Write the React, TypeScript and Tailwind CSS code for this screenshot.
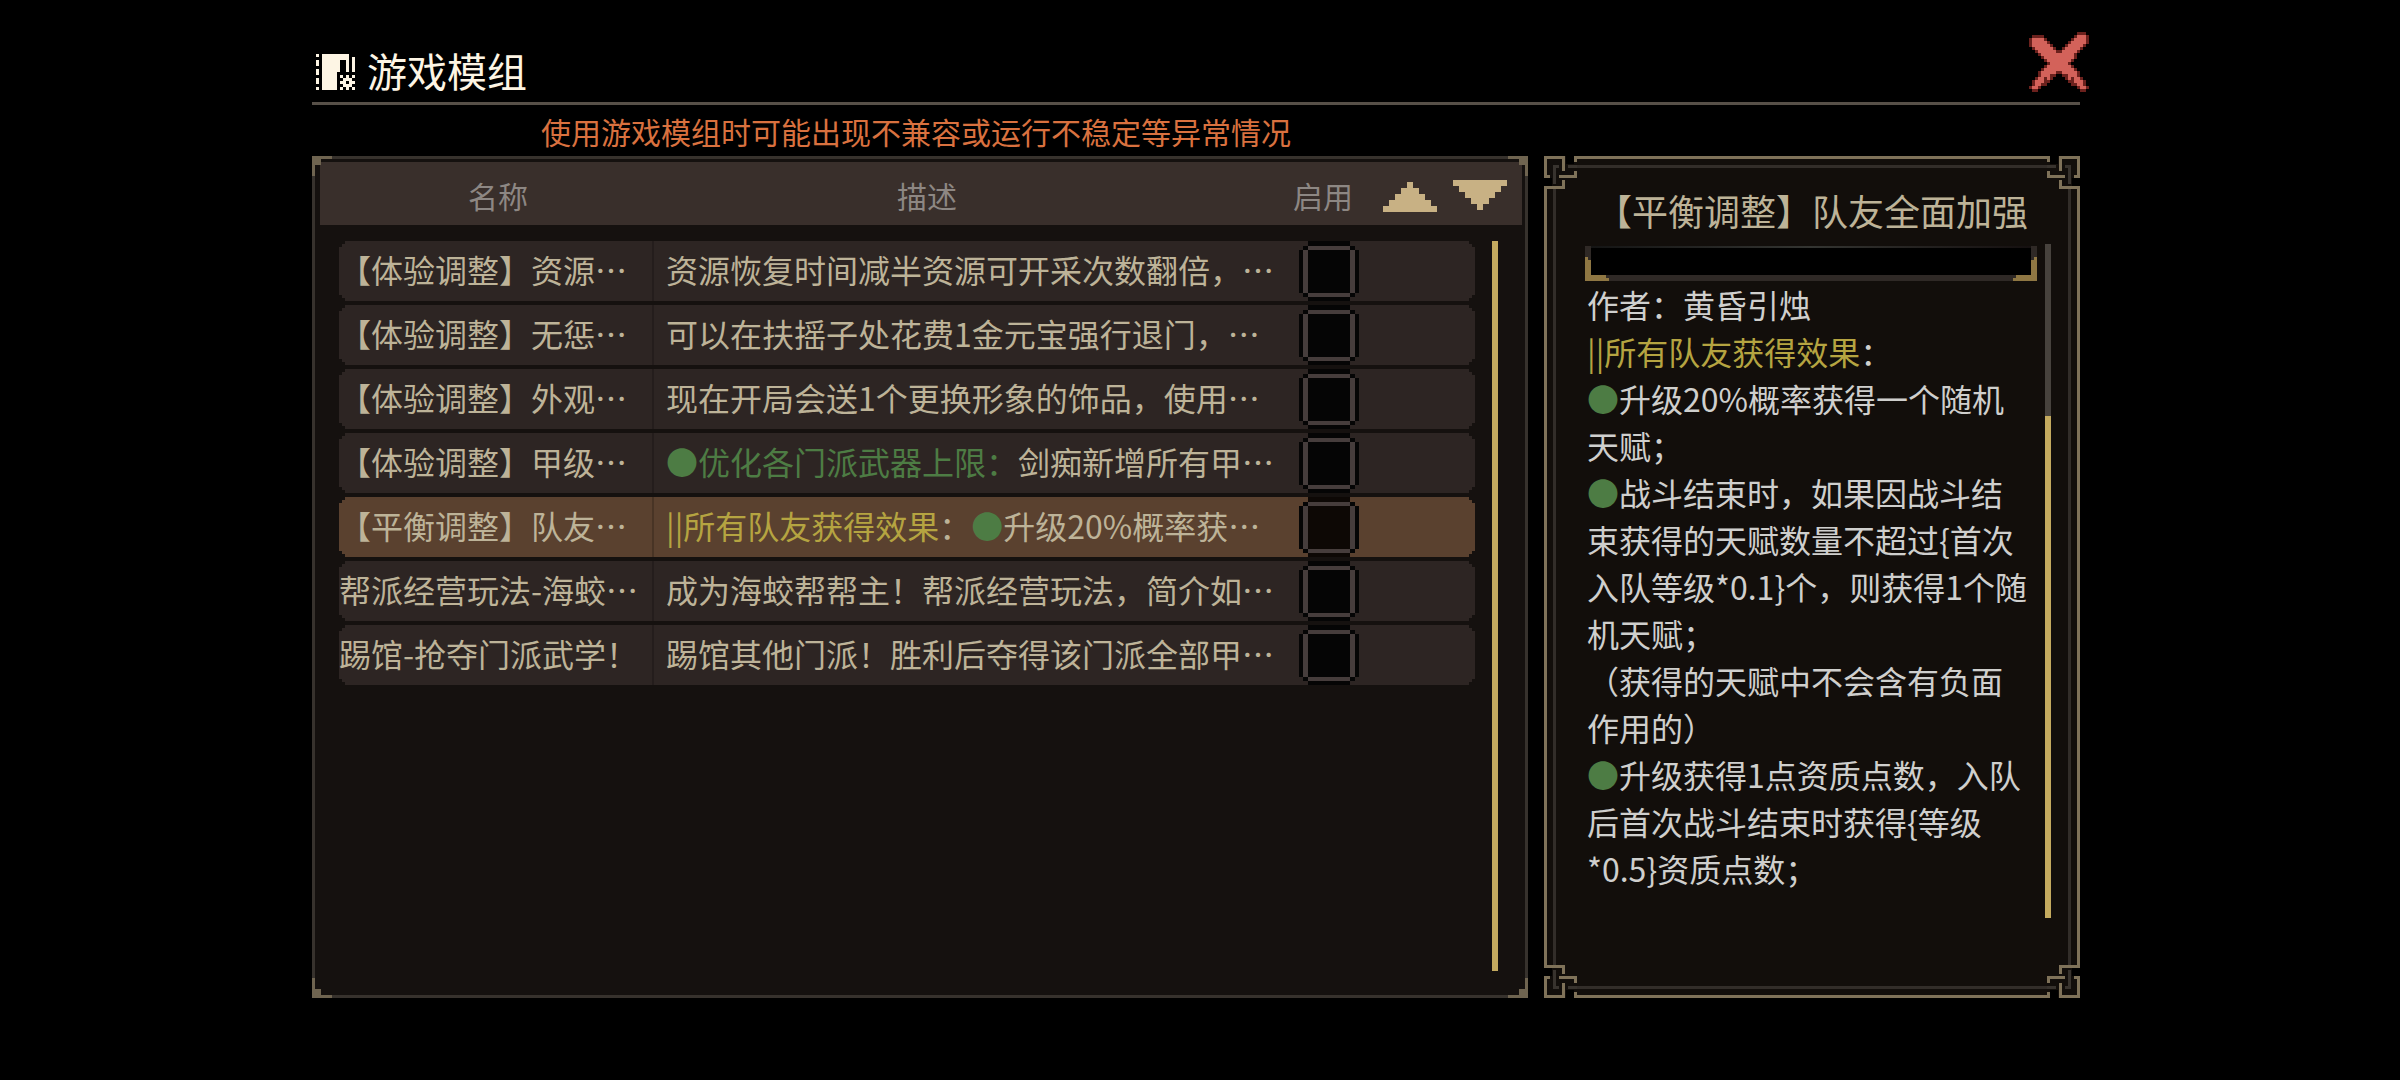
import React, { useState } from "react";
import clsx from "clsx";

interface Mod {
  id: string;
  name: string;
  description: React.ReactNode;
}

const Dot: React.FC = () => <span className="text-[#4d7c44]">●</span>;

const MODS: Mod[] = [
  { id: "resource", name: "【体验调整】资源…", description: "资源恢复时间减半资源可开采次数翻倍，…" },
  { id: "penalty", name: "【体验调整】无惩…", description: "可以在扶摇子处花费1金元宝强行退门，…" },
  { id: "look", name: "【体验调整】外观…", description: "现在开局会送1个更换形象的饰品，使用…" },
  {
    id: "weapon",
    name: "【体验调整】甲级…",
    description: (
      <>
        <span className="text-[#4d7c44]">●优化各门派武器上限：</span>剑痴新增所有甲…
      </>
    )
  },
  {
    id: "teammate",
    name: "【平衡调整】队友…",
    description: (
      <>
        <span className="text-[#b5a441]">||所有队友获得效果</span>：<Dot />升级20%概率获…
      </>
    )
  },
  { id: "gang", name: "帮派经营玩法-海蛟…", description: "成为海蛟帮帮主！帮派经营玩法，简介如…" },
  { id: "dojo", name: "踢馆-抢夺门派武学！", description: "踢馆其他门派！胜利后夺得该门派全部甲…" }
];

const BOOK_PIXELS = [
  "X.XXXXXXXXX..",
  "..XXXXXXXXX.X",
  "X.XXXXXX..X.X",
  "X.XXXXXX..X.X",
  "..XXXXXX..X.X",
  "X.XXXXXX..X.X",
  "X.XXXXX......",
  "..XXXXX.X.X.X",
  "X.XXXXX..XXX.",
  "X.XXXXX.XX.XX",
  "..XXXXX..XXX.",
  "X.XXXXX.X.X.X"
];

const CLOSE_PIXELS = [
  "................ddd.",
  ".dddd..........drrrd",
  "drrrrd........drrrrd",
  "drrrrrd......drrrrrd",
  "drrrrrrd....drrrrrd.",
  ".drrrrrrd..drrrrrd..",
  "..drrrrrrddrrrrrd...",
  "...drrrrrrrrrrrd....",
  "....drrrrrrrrrrd....",
  ".....drrrrrrrrd.....",
  "......drrrrrrd......",
  ".....drrrrrrrrd.....",
  "....drrrrrrrrrrd....",
  "...drrrrrddrrrrrd...",
  "...drrrdd..ddrrrd...",
  "..drrdrd....drdrrd..",
  ".drrrdd......ddrrrd.",
  ".drrdd........ddrrd.",
  "drrd............drrd",
  ".dd..............dd."
];

const PIXEL_COLORS: Record<string, string> = { X: "#fdf5e4", d: "#6b211d", r: "#d3625a" };

const PixelArt: React.FC<{ rows: string[]; className: string }> = ({ rows, className }) => (
  <svg
    viewBox={`0 0 ${rows[0].length} ${rows.length}`}
    className={className}
    shapeRendering="crispEdges"
    aria-hidden="true"
  >
    {rows.map((row, y) =>
      row.split("").map((c, x) =>
        c === "." ? null : <rect key={`${x}-${y}`} x={x} y={y} width="1" height="1" fill={PIXEL_COLORS[c]} />
      )
    )}
  </svg>
);

const Triangle: React.FC<{ flipped?: boolean }> = ({ flipped }) => (
  <svg
    viewBox="0 0 9 5"
    className={clsx("w-[54px] h-[30px]", flipped && "-scale-y-100")}
    fill="#c8b184"
    shapeRendering="crispEdges"
    aria-hidden="true"
  >
    <path d="M4 0h1v1h1v1h1v1h1v1h1v1H0V4h1V3h1V2h1V1h1z" />
  </svg>
);

/* Small L-shaped bracket on the list panel */
const Bracket: React.FC<{ className: string }> = ({ className }) => (
  <svg viewBox="0 0 20 20" className={clsx("absolute w-5 h-5", className)} fill="#6f6450" shapeRendering="crispEdges" aria-hidden="true">
    <path d="M0 0h20v3H9v6H3v11H0z" />
  </svg>
);

/* Woven corner on the detail panel */
const Knot: React.FC<{ className: string }> = ({ className }) => (
  <svg viewBox="0 0 33 33" className={clsx("absolute w-[33px] h-[33px]", className)} shapeRendering="crispEdges" aria-hidden="true">
    <path d="M0 0h33v33H0z" fill="#120e0b" />
    <path d="M0 22h8v8H0zM22 0h8v8h-8z" fill="#000" />
    <path d="M9 9h6v3h-3v16H9zM24 9h9v3h-9z" fill="#38332e" />
    <path
      d="M0 0h21v15h-3V3H3v16h3v3H0zM0 30h18v-6h3v9H0zM15 19h15v-4h3v7H15zM30 0h3v6h-3z"
      fill="#7f7259"
    />
  </svg>
);

const ModCheckbox: React.FC<{
  label: string;
  active: boolean;
  checked: boolean;
  onChange: () => void;
}> = ({ label, active, checked, onChange }) => (
  <label className="relative block w-[60px] h-[60px] cursor-pointer">
    <input
      type="checkbox"
      checked={checked}
      onChange={onChange}
      aria-label={label}
      className="absolute inset-0 w-full h-full appearance-none cursor-pointer"
    />
    <svg viewBox="0 0 60 60" className="relative w-full h-full pointer-events-none" shapeRendering="crispEdges" aria-hidden="true">
      <path d="M9 0h42v5h5v4h4v43h-4v4h-5v4H9v-4H4v-4H0V9h4V5h5z" fill="#050505" />
      {active && <path d="M9 0h42v60H9z" fill="#0d0805" />}
      <path d="M9 5h42v4H9zM9 52h42v4H9zM4 9h5v43H4zM51 9h5v43h-5z" fill="#463d3c" />
      {checked && <path d="M18 30h5v5h5v5h4v-5h4v-6h4v-6h4v8h-4v6h-4v6h-4v5h-4v-5h-5v-5h-5z" fill="#c4aa5f" />}
    </svg>
  </label>
);

export default function App() {
  const [selectedId, setSelectedId] = useState("teammate");
  const [enabled, setEnabled] = useState<string[]>([]);

  const toggleMod = (id: string) => {
    setEnabled((prev) => (prev.includes(id) ? prev.filter((item) => item !== id) : [...prev, id]));
  };

  return (
    <div
      lang="zh-CN"
      className="min-h-screen bg-black pl-78 pr-80 pb-[82px] flex flex-col font-['Noto_Sans_CJK_SC',sans-serif] text-[#bdb398]"
    >
      {/* Header */}
      <header className="h-[105px] pt-8 border-b-3 border-[#575048] flex justify-between">
        <div className="self-end h-[60px] pl-1 flex items-center gap-3 text-[#fdf5e4]">
          <PixelArt rows={BOOK_PIXELS} className="w-[39px] h-[36px]" />
          <h1 className="pb-1 text-[40px] leading-[56px]">游戏模组</h1>
        </div>
        <button type="button" aria-label="关闭" className="self-start -mr-[9px] cursor-pointer">
          <PixelArt rows={CLOSE_PIXELS} className="w-[60px] h-[60px]" />
        </button>
      </header>

      <main className="flex-1 flex gap-4">
        {/* Mod list */}
        <section className="flex-1 min-w-0 flex flex-col">
          <p className="h-[51px] pt-1 pr-2 text-center text-[30px] leading-[45px] text-[#d9713f]">
            使用游戏模组时可能出现不兼容或运行不稳定等异常情况
          </p>
          <div className="relative flex-1 flex border-3 border-[#37322d] bg-[#15110f]">
            <table className="flex-1 min-w-0 pt-[3px] flex flex-col">
              <thead className="block pl-[5px]">
                <tr className="h-[63px] pt-1 -mr-[47px] bg-[#392f2b] flex items-center text-[30px] text-[#8d8783]">
                  <th className="w-[356px] font-normal">名称</th>
                  <th className="flex-1 pr-[86px] font-normal">描述</th>
                  <th className="w-[119px] text-left font-normal">
                    <span className="pl-[29px]">启用</span>
                  </th>
                  <th className="pr-[15px] flex gap-4 font-normal">
                    <button type="button" aria-label="上移" className="pt-[2px] cursor-pointer">
                      <Triangle />
                    </button>
                    <button type="button" aria-label="下移" className="pb-[2px] cursor-pointer">
                      <Triangle flipped />
                    </button>
                  </th>
                </tr>
              </thead>
              <tbody className="pt-4 pl-6 flex flex-col gap-1">
                {MODS.map((mod) => (
                  <tr
                    key={mod.id}
                    onClick={() => setSelectedId(mod.id)}
                    className={clsx(
                      "h-[60px] flex items-center text-[32px] leading-[56px] whitespace-nowrap cursor-pointer",
                      "[clip-path:polygon(0_6px,3px_6px,3px_3px,6px_3px,6px_0,calc(100%-6px)_0,calc(100%-6px)_3px,calc(100%-3px)_3px,calc(100%-3px)_6px,100%_6px,100%_calc(100%-6px),calc(100%-3px)_calc(100%-6px),calc(100%-3px)_calc(100%-3px),calc(100%-6px)_calc(100%-3px),calc(100%-6px)_100%,6px_100%,6px_calc(100%-3px),3px_calc(100%-3px),3px_calc(100%-6px),0_calc(100%-6px))]",
                      mod.id === selectedId ? "bg-[#5a412f]" : "bg-[#2d2523]"
                    )}
                  >
                    <td className="w-[315px] pb-1 border-r-2 border-black/20">{mod.name}</td>
                    <td className="flex-1 min-w-0 pl-3 pb-1 overflow-hidden">{mod.description}</td>
                    <td className="w-[176px]">
                      <ModCheckbox
                        label={`启用 ${mod.name}`}
                        active={mod.id === selectedId}
                        checked={enabled.includes(mod.id)}
                        onChange={() => toggleMod(mod.id)}
                      />
                    </td>
                  </tr>
                ))}
              </tbody>
            </table>
            <div className="w-[6px] ml-[17px] mr-[27px] mt-[82px] mb-6 bg-[#c4aa5f]" />
            <Bracket className="-top-[3px] -left-[3px]" />
            <Bracket className="-top-[3px] -right-[3px] -scale-x-100" />
            <Bracket className="-bottom-[3px] -left-[3px] -scale-y-100" />
            <Bracket className="-bottom-[3px] -right-[3px] -scale-100" />
          </div>
        </section>

        {/* Mod detail */}
        <aside className="relative w-[536px] mt-[51px] pt-[27px] pb-[77px] px-[26px] flex flex-col border-3 -outline-offset-12 outline-3 outline-[#322d29] border-[#7f7259] bg-[#120e0b]">
          <h2 className="h-12 text-center text-[36px] leading-[48px] whitespace-nowrap">【平衡调整】队友全面加强</h2>
          <div className="flex-1 mt-[10px] pl-3 flex justify-between">
            <div className="w-[452px]">
              <div className="relative mt-[2px] h-[35px] border-x-6 border-b-6 border-[#2f2926] bg-black">
                <div className="h-[2px] bg-linear-to-r from-[#151515] via-[#343532] to-[#151010]" />
                <svg viewBox="0 0 24 24" className="absolute -left-[6px] -bottom-[6px] w-6 h-6" fill="#8f7743" shapeRendering="crispEdges" aria-hidden="true">
                  <path d="M0 0h3v3h3v15h15v3h3v3H0z" />
                </svg>
                <svg viewBox="0 0 24 24" className="absolute -right-[6px] -bottom-[6px] w-6 h-6 -scale-x-100" fill="#8f7743" shapeRendering="crispEdges" aria-hidden="true">
                  <path d="M0 0h3v3h3v15h15v3h3v3H0z" />
                </svg>
              </div>
              <div className="pl-[2px] pr-[6px] text-[32px] leading-[47px] text-[#cfcfcd]">
                <p>作者：黄昏引烛</p>
                <p>
                  <span className="text-[#b5a441]">||所有队友获得效果</span>：
                </p>
                <p>
                  <Dot />升级20%概率获得一个随机天赋；
                </p>
                <p>
                  <Dot />战斗结束时，如果因战斗结束获得的天赋数量不超过{"{"}首次入队等级*0.1{"}"}个，则获得1个随机天赋；
                </p>
                <p>（获得的天赋中不会含有负面作用的）</p>
                <p>
                  <Dot />升级获得1点资质点数，入队后首次战斗结束时获得{"{"}等级*0.5{"}"}资质点数；
                </p>
              </div>
            </div>
            <div className="w-[6px] bg-[#47423d] flex flex-col">
              <div className="mt-[172px] flex-1 bg-[#c4aa5f]" />
            </div>
          </div>
          <Knot className="-top-[3px] -left-[3px]" />
          <Knot className="-top-[3px] -right-[3px] -scale-x-100" />
          <Knot className="-bottom-[3px] -left-[3px] -scale-y-100" />
          <Knot className="-bottom-[3px] -right-[3px] -scale-100" />
        </aside>
      </main>
    </div>
  );
}
